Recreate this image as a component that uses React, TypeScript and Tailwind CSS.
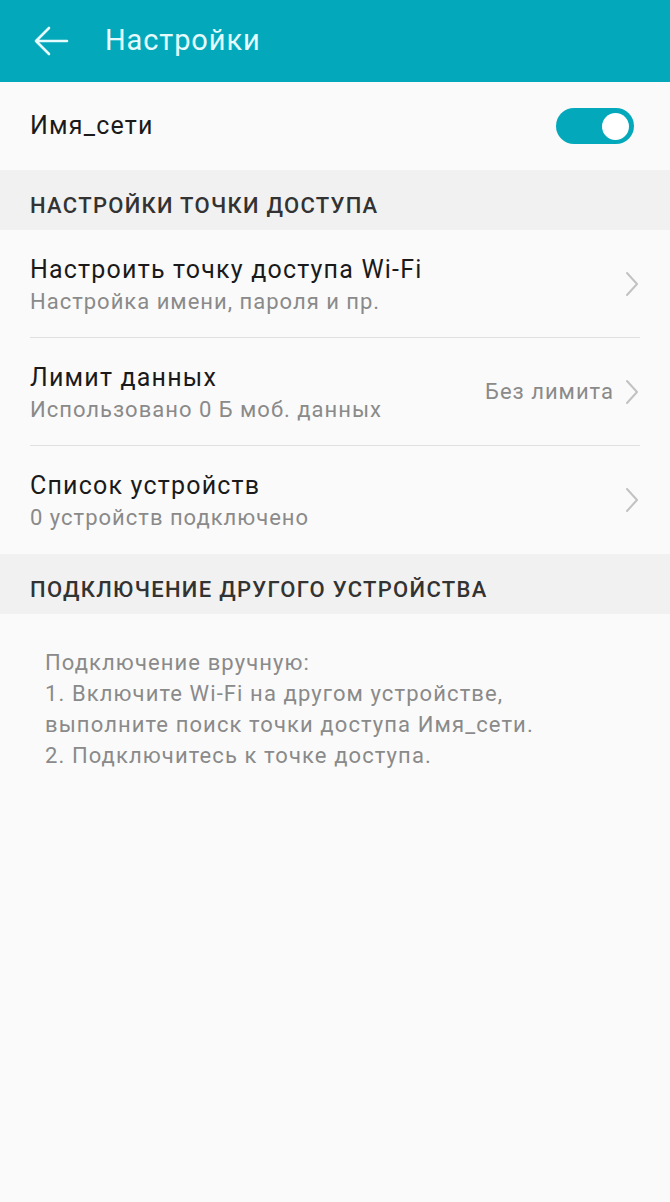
import React, { useState } from 'react';

const Chevron = () => (
  <svg width="16" height="28" viewBox="0 0 16 28" fill="none" className="shrink-0">
    <path d="M3 3l10 11L3 25" stroke="#c2c2c2" strokeWidth="2" strokeLinecap="round" strokeLinejoin="round" />
  </svg>
);

interface RowProps {
  title: string;
  subtitle: string;
  value?: string;
  last?: boolean;
}

const Row: React.FC<RowProps> = ({ title, subtitle, value, last }) => (
  <div className="pl-[30px] pr-[30px]">
    <div className={`flex items-center h-[108px] ${last ? '' : 'border-b border-[#e0e0e0]'}`}>
      <div className="flex-1 min-w-0 pt-[2px]">
        <div className="text-[25px] leading-[32px] tracking-[1.2px] text-[#1a1a1a] whitespace-nowrap">{title}</div>
        <div className="text-[22px] leading-[28px] tracking-[1px] text-[#8a8a8a] mt-[2px] whitespace-nowrap">{subtitle}</div>
      </div>
      <div className="flex items-center gap-[10px]">
        {value && <span className="text-[22px] tracking-[1px] text-[#8a8a8a]">{value}</span>}
        <Chevron />
      </div>
    </div>
  </div>
);

const SectionHeader = ({ children }: { children: React.ReactNode }) => (
  <div className="h-[60px] bg-[#f1f1f1] flex items-center pt-[10px] pl-[30px] text-[22px] tracking-[1.3px] font-medium text-[#333333]">
    {children}
  </div>
);

export default function App() {
  const [on, setOn] = useState(true);
  return (
    <div className="min-h-[1202px] bg-[#fafafa] font-['Roboto','Noto_Sans',sans-serif]">
      <div className="h-[82px] bg-[#03a9bb] flex items-center">
        <svg width="36" height="32" viewBox="0 0 36 32" className="ml-[33px]" fill="none">
          <path d="M34 16H3M16 3L3 16l13 13" stroke="#e6fbfd" strokeWidth="2.6" strokeLinecap="round" strokeLinejoin="round" />
        </svg>
        <span className="ml-[36px] text-[29px] tracking-[0.9px] text-[#e6fbfd]">Настройки</span>
      </div>

      <div className="h-[88px] flex items-center justify-between pl-[30px] pr-[36px]">
        <span className="text-[25px] tracking-[1.2px] text-[#1a1a1a]">Имя_сети</span>
        <button
          onClick={() => setOn(!on)}
          className={`w-[78px] h-[36px] rounded-full flex items-center px-[5px] ${on ? 'bg-[#03a9bb] justify-end' : 'bg-[#bdbdbd] justify-start'}`}
        >
          <span className="w-[27px] h-[27px] rounded-full bg-white block" />
        </button>
      </div>

      <SectionHeader>НАСТРОЙКИ ТОЧКИ ДОСТУПА</SectionHeader>

      <Row title="Настроить точку доступа Wi-Fi" subtitle="Настройка имени, пароля и пр." />
      <Row title="Лимит данных" subtitle="Использовано 0 Б моб. данных" value="Без лимита" />
      <Row title="Список устройств" subtitle="0 устройств подключено" last />

      <SectionHeader>ПОДКЛЮЧЕНИЕ ДРУГОГО УСТРОЙСТВА</SectionHeader>

      <div className="pl-[45px] pr-[20px] pt-[33px] text-[22px] leading-[31px] tracking-[1.1px] text-[#8a8a8a] whitespace-nowrap">
        <div>Подключение вручную:</div>
        <div>1. Включите Wi-Fi на другом устройстве,</div>
        <div>выполните поиск точки доступа Имя_сети.</div>
        <div>2. Подключитесь к точке доступа.</div>
      </div>
    </div>
  );
}
